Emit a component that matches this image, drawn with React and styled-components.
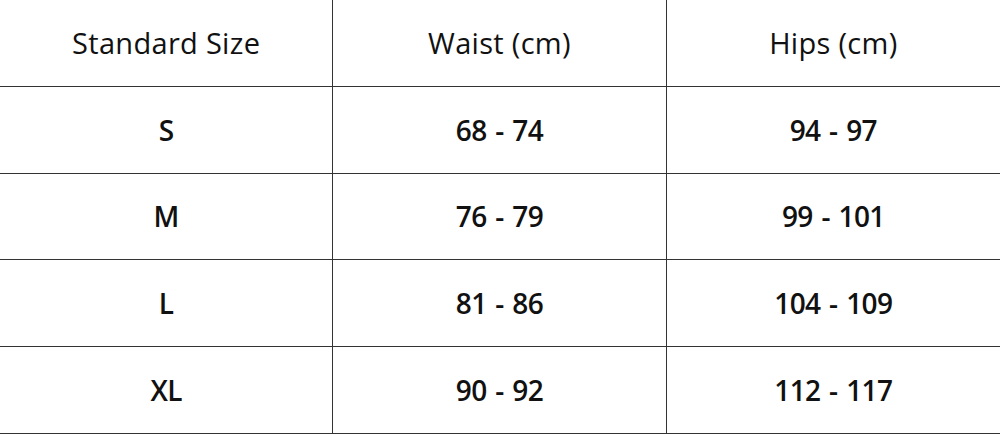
import React from "react";
import styled, { createGlobalStyle } from "styled-components";

const Global = createGlobalStyle`
  html, body { margin: 0; padding: 0; background: #fff; }
  body { font-family: "Open Sans", "DejaVu Sans", sans-serif; color: #111; }
`;

const Table = styled.div`
  display: grid;
  grid-template-columns: repeat(3, 1fr);
  grid-auto-rows: 86.8px;
  width: 1000px;
`;

const Cell = styled.div`
  display: flex;
  align-items: center;
  justify-content: center;
  border-bottom: 1px solid #333;
  border-right: ${(p) => (p.$last ? "none" : "1px solid #333")};
  font-size: ${(p) => (p.$head ? "29px" : "28px")};
  font-weight: ${(p) => (p.$head ? 400 : 600)};
  letter-spacing: ${(p) => (p.$head ? "0.3px" : "-0.6px")};
  word-spacing: ${(p) => (p.$head ? "0" : "2px")};
  box-sizing: border-box;
`;

const head = ["Standard Size", "Waist (cm)", "Hips (cm)"];
const rows = [
  ["S", "68 - 74", "94 - 97"],
  ["M", "76 - 79", "99 - 101"],
  ["L", "81 - 86", "104 - 109"],
  ["XL", "90 - 92", "112 - 117"],
];

export default function App() {
  return (
    <>
      <Global />
      <Table>
        {head.map((h, i) => (
          <Cell key={h} $head $last={i === 2}>{h}</Cell>
        ))}
        {rows.map((r) =>
          r.map((c, i) => (
            <Cell key={r[0] + i} $last={i === 2}>{c}</Cell>
          ))
        )}
      </Table>
    </>
  );
}
